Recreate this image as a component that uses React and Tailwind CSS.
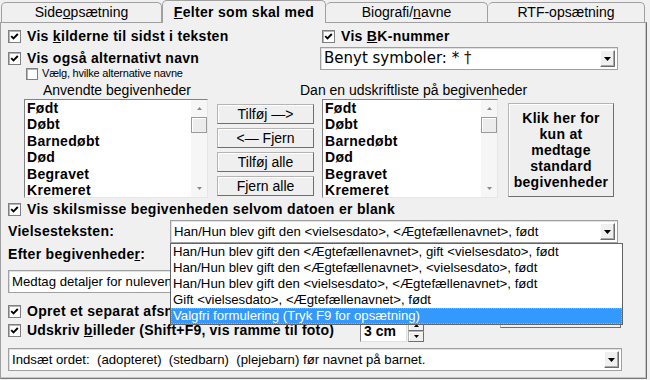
import React from "react";

const listItems = ["Født", "Døbt", "Barnedøbt", "Død", "Begravet", "Kremeret"];

const dropItems = [
  "Han/Hun blev gift den <Ægtefællenavnet>, gift <vielsesdato>, født",
  "Han/Hun blev gift den <Ægtefællenavnet>, <vielsesdato>, født",
  "Han/Hun blev gift den <vielsesdato>, <Ægtefællenavnet>, født",
  "Gift <vielsesdato>, <Ægtefællenavnet>, født",
];

function Check({ checked = true, small = false }) {
  return (
    <span
      className={`${small ? "w-[12px] h-[12px]" : "w-[13px] h-[13px]"} shrink-0 flex items-center justify-center bg-white border border-[#808080] shadow-[inset_1px_1px_0_#b4b4b4]`}
    >
      {checked && (
        <svg width="9" height="9" viewBox="0 0 9 9">
          <path d="M1.2 4.2 L3.5 6.5 L7.8 2" stroke="#000" strokeWidth="1.9" fill="none" />
        </svg>
      )}
    </span>
  );
}

function DownArrow() {
  return (
    <svg width="7" height="4" viewBox="0 0 7 4">
      <polygon points="0,0 7,0 3.5,4" fill="#000" />
    </svg>
  );
}

function Combo({ className = "", textClass = "text-[13.2px]", children }) {
  return (
    <div className={`flex items-stretch bg-white border border-[#a0a0a0] shadow-[inset_1px_1px_0_#e0e0e0] ${className}`}>
      <div className={`flex-1 flex items-center pl-[3px] whitespace-pre overflow-hidden ${textClass}`}>{children}</div>
      <div className="my-[2px] mr-[2px] w-[15px] flex items-center justify-center bg-[#f0f0f0] border border-[#ffffff] border-b-[#6e6e6e] border-r-[#6e6e6e] shadow-[inset_-1px_-1px_0_#a8a8a8]">
        <DownArrow />
      </div>
    </div>
  );
}

function ScrollBar() {
  return (
    <div className="w-[16px] flex flex-col bg-[#f6f6f6]">
      <div className="h-[17px] flex items-center justify-center">
        <svg width="5" height="3" viewBox="0 0 5 3">
          <polygon points="0,3 5,3 2.5,0" fill="#8a8a8a" />
        </svg>
      </div>
      <div className="h-[16px] bg-[#ececec] border border-[#9a9a9a] shadow-[inset_1px_1px_0_#ffffff]" />
      <div className="flex-1" />
      <div className="h-[17px] flex items-center justify-center">
        <svg width="5" height="3" viewBox="0 0 5 3">
          <polygon points="0,0 5,0 2.5,3" fill="#8a8a8a" />
        </svg>
      </div>
    </div>
  );
}

function ListBox({ className = "" }) {
  return (
    <div className={`h-[99px] flex bg-white border border-[#828282] border-b-[#e6e6e6] border-r-[#e6e6e6] ${className}`}>
      <div className="flex-1 pl-[2px] text-[14px] font-bold tracking-[0.3px] leading-[16.4px] overflow-hidden">
        {listItems.map((it) => (
          <div key={it}>{it}</div>
        ))}
      </div>
      <ScrollBar />
    </div>
  );
}

function Btn({ className = "", children }) {
  return (
    <div
      className={`flex items-center justify-center bg-[#efefef] border border-[#b4b4b4] border-b-[#6e6e6e] border-r-[#6e6e6e] shadow-[inset_1px_1px_0_#ffffff] ${className}`}
    >
      {children}
    </div>
  );
}

export default function App() {
  return (
    <div className="relative w-[650px] h-[380px] overflow-hidden bg-[#f0f0f0] text-black font-['Liberation_Sans',Arial,sans-serif]">
      {/* faner */}
      <div className="flex items-end h-[22px] text-[14px]">
        <div className="ml-[1px] w-[161px] h-[20px] flex items-center justify-center border border-b-0 border-[#a0a0a0] rounded-t-[5px]">
          Side<u>o</u>psætning
        </div>
        <div className="relative z-10 w-[164px] h-[23px] -mb-[1px] flex items-center justify-center bg-[#f0f0f0] border border-b-0 border-[#a0a0a0] rounded-t-[5px] font-bold tracking-[0.3px]">
          <span className="pt-[1px]">
            <u>F</u>elter som skal med
          </span>
        </div>
        <div className="w-[162px] h-[20px] flex items-center justify-center border border-b-0 border-l-0 border-[#a0a0a0] rounded-t-[5px]">
          Biografi/<u>n</u>avne
        </div>
        <div className="w-[157px] h-[20px] flex items-center justify-center border border-b-0 border-l-0 border-[#a0a0a0] rounded-t-[5px]">
          RTF-opsætning
        </div>
      </div>

      {/* panel */}
      <div className="w-[647px] h-[357px] border border-[#a0a0a0] border-r-[#6e6e6e] border-b-[#7a7a7a] shadow-[inset_-1px_-1px_0_#c4c4c4] pl-[7px]">
        <div className="mt-[5px] flex">
          <div className="w-[312px]">
            <div className="h-[17px] flex items-center gap-[6px] text-[14px] font-bold tracking-[0.3px]">
              <Check />
              <span>
                Vis <u>k</u>ilderne til sidst i teksten
              </span>
            </div>
            <div className="mt-[5px] h-[17px] flex items-center gap-[6px] text-[14px] font-bold tracking-[0.3px]">
              <Check />
              <span>Vis også alternativt navn</span>
            </div>
            <div className="h-[13px] ml-[18px] flex items-center gap-[4px] text-[11px] tracking-[-0.2px]">
              <Check checked={false} small />
              <span>Vælg, hvilke alternative navne</span>
            </div>
          </div>
          <div className="w-[298px]">
            <div className="h-[17px] ml-[2px] flex items-center gap-[6px] text-[14px] font-bold tracking-[0.3px]">
              <Check />
              <span>
                Vis <u>B</u>K-nummer
              </span>
            </div>
            <Combo className="mt-[2px] h-[23px]" textClass="text-[15px] font-['DejaVu_Sans',sans-serif]">
              Benyt symboler: * <span className="text-[#402000]">†</span>
            </Combo>
          </div>
        </div>

        <div className="mt-[2px] h-[16px] flex items-center text-[14px]">
          <div className="w-[292px] pl-[35px]">Anvendte begivenheder</div>
          <div>Dan en udskriftliste på begivenheder</div>
        </div>

        <div className="mt-[1px] h-[99px] flex items-start">
          <ListBox className="ml-[16px] w-[184px]" />
          <div className="ml-[9px] w-[97px] pt-[5px] flex flex-col gap-[4px] text-[14px]">
            <Btn className="h-[20px]">Tilføj —&gt;</Btn>
            <Btn className="h-[20px]">&lt;— Fjern</Btn>
            <Btn className="h-[20px]">Tilføj alle</Btn>
            <Btn className="h-[20px]">Fjern alle</Btn>
          </div>
          <ListBox className="ml-[8px] w-[176px]" />
          <Btn className="ml-[10px] mt-[4px] w-[106px] h-[94px] text-[14px] font-bold tracking-[0.3px] leading-[16px] text-center">
            Klik her for
            <br />
            kun at
            <br />
            medtage
            <br />
            standard
            <br />
            begivenheder
          </Btn>
        </div>

        <div className="mt-[3px] h-[17px] flex items-center gap-[6px] text-[14px] font-bold tracking-[0.3px]">
          <Check />
          <span>Vis skilsmisse begivenheden selvom datoen er blank</span>
        </div>

        <div className="mt-[2px] h-[23px] flex items-center">
          <div className="w-[162px] text-[14px] font-bold tracking-[0.3px]">Vielsesteksten:</div>
          <Combo className="w-[448px] h-[23px]">
            Han/Hun blev gift den &lt;vielsesdato&gt;, &lt;Ægtefællenavnet&gt;, født
          </Combo>
        </div>

        <div className="mt-[3px] h-[17px] flex items-center text-[14px] font-bold tracking-[0.3px]">
          Efter begivenhede<u>r</u>:
        </div>

        {/* kun venstre del er synlig under den åbne liste */}
        <div className="mt-[7px] w-[164px] h-[23px] flex items-center pl-[3px] bg-white border border-r-0 border-[#a0a0a0] shadow-[inset_1px_1px_0_#e0e0e0] text-[13.2px] whitespace-nowrap overflow-hidden">
          Medtag detaljer for nulevende personer
        </div>

        <div className="mt-[10px] h-[17px] flex items-start">
          <div className="w-[162px] h-[17px] flex items-center gap-[6px] text-[14px] font-bold tracking-[0.3px] whitespace-nowrap overflow-hidden">
            <Check />
            <span>Opret et separat afsnit for hver ægtefælle</span>
          </div>
          <Btn className="ml-[330px] mt-[3px] w-[121px] h-[22px]" />
        </div>

        <div className="h-[22px] flex items-start">
          <div className="mt-[2px] w-[352px] h-[17px] flex items-center gap-[6px] text-[14px] font-bold tracking-[0.2px]">
            <Check />
            <span>
              Udskriv <u>b</u>illeder (Shift+F9, vis ramme til foto)
            </span>
          </div>
          <div className="w-[47px] h-[22px] flex items-center pl-[3px] bg-white border border-[#828282] border-b-[#e0e0e0] border-r-[#e0e0e0] text-[14px] font-bold">
            3 cm
          </div>
          <div className="ml-[1px] w-[16px] h-[22px] flex flex-col">
            <Btn className="h-[11px]">
              <svg width="5" height="3" viewBox="0 0 5 3">
                <polygon points="0,3 5,3 2.5,0" fill="#000" />
              </svg>
            </Btn>
            <Btn className="h-[11px]">
              <svg width="5" height="3" viewBox="0 0 5 3">
                <polygon points="0,0 5,0 2.5,3" fill="#000" />
              </svg>
            </Btn>
          </div>
        </div>

        <Combo className="mt-[6px] w-[614px] h-[23px]">
          Indsæt ordet:  (adopteret)  (stedbarn)  (plejebarn) før navnet på barnet.
        </Combo>
      </div>

      {/* åben rulleliste */}
      <div className="absolute left-[170px] top-[243px] w-[453px] h-[82px] z-20 bg-white border border-[#646464] text-[13.2px]">
        {dropItems.map((it) => (
          <div key={it} className="h-[16px] leading-[16px] pl-[2px] whitespace-pre">
            {it}
          </div>
        ))}
        <div className="h-[16px] leading-[14px] pl-[1px] bg-[#3399ff] text-white border border-dotted border-[#e8a050]">
          Valgfri formulering (Tryk F9 for opsætning)
        </div>
      </div>
    </div>
  );
}
